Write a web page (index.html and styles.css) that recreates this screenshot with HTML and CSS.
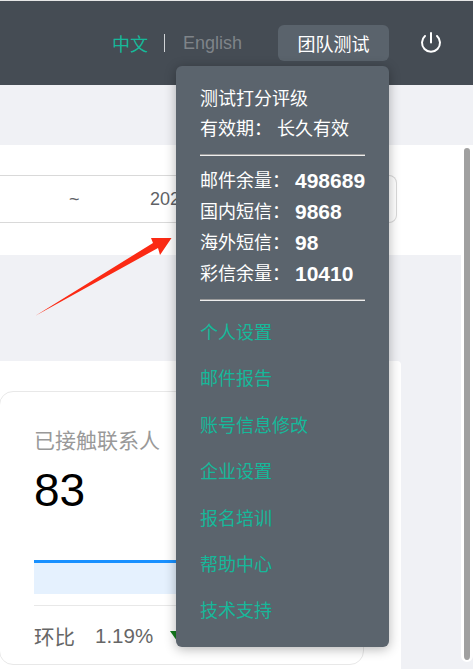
FILE: index.html
```html
<!DOCTYPE html>
<html lang="zh-CN">
<head>
  <meta charset="UTF-8" />
  <meta name="viewport" content="width=device-width, initial-scale=1.0"/>
  <title>团队测试</title>
  <link rel="stylesheet" href="styles.css">
</head>
<body>
  <header class="topbar">
    <a class="lang lang-active">中文</a>
    <span class="lang-sep"></span>
    <a class="lang">English</a>
    <button class="team-btn">团队测试</button>
    <svg class="power" width="22" height="22" viewBox="0 0 22 22" fill="none" stroke="#fff" stroke-width="2" stroke-linecap="round">
      <path d="M11 1V10.500"/>
      <path d="M5 4A9 9 0 1 0 17 4"/>
    </svg>
  </header>

  <main class="content">
    <section class="date-panel">
      <div class="date-range">
        <span class="tilde">~</span>
        <span class="date-end">202</span>
      </div>
    </section>
    <div class="gap-band"></div>
    <section class="stats-panel">
      <div class="stat-card">
        <div class="stat-title">已接触联系人</div>
        <div class="stat-num">83</div>
        <div class="chart"></div>
        <div class="stat-foot">
          <span class="foot-label">环比</span>
          <span class="foot-val">1.19%</span>
          <span class="foot-arrow"></span>
        </div>
      </div>
    </section>
  </main>

  <div class="scroll-thumb"></div>

  <svg class="red-arrow" width="137" height="80" viewBox="0 0 137 80">
    <path fill="#fb2a14" d="M0 78L118 5L116 0L136.500 0L125 17L123 10Z"/>
  </svg>

  <aside class="user-menu">
    <div class="menu-line">测试打分评级</div>
    <div class="menu-line">有效期：&nbsp;长久有效</div>
    <hr class="menu-rule">
    <div class="quota"><span>邮件余量：</span><b>498689</b></div>
    <div class="quota"><span>国内短信：</span><b>9868</b></div>
    <div class="quota"><span>海外短信：</span><b>98</b></div>
    <div class="quota"><span>彩信余量：</span><b>10410</b></div>
    <hr class="menu-rule rule-low">
    <nav class="menu-links">
      <a>个人设置</a>
      <a>邮件报告</a>
      <a>账号信息修改</a>
      <a>企业设置</a>
      <a>报名培训</a>
      <a>帮助中心</a>
      <a>技术支持</a>
    </nav>
  </aside>
</body>
</html>
```

FILE: styles.css
```css
html, body {
  margin: 0;
  height: 669px;
  overflow: hidden;
}
body {
  font-family: "Liberation Sans", "Noto Sans CJK SC", sans-serif;
  background-color: #f0f1f5;
  position: relative;
  border-top: 1px solid #e6e6e6;
  box-sizing: border-box;
}

.topbar {
  height: 84px;
  background-color: #454c54;
  display: flex;
  align-items: center;
  justify-content: flex-end;
  padding: 0 31px 0 0;
  box-sizing: border-box;
}
.lang {
  font-size: 18px;
  color: #7f8489;
}
.lang-active {
  color: #16b89a;
}
.lang-sep {
  width: 1px;
  height: 18px;
  background-color: #d0d3d6;
  margin: 0 18px 0 16px;
}
.team-btn {
  width: 111px;
  height: 36px;
  margin: 0 31px 0 36px;
  border: none;
  border-radius: 6px;
  background-color: #5a636c;
  color: #fff;
  font: 18px "Liberation Sans", "Noto Sans CJK SC", sans-serif;
  padding: 0;
}
.power {
  display: block;
}

.content {
  padding-top: 60px;
}
.scroll-thumb {
  position: absolute;
  left: 461px;
  top: 144px;
  width: 12px;
  height: 517px;
  box-sizing: border-box;
  border: 3px solid #fff;
  border-bottom-width: 2px;
  border-radius: 6px;
  background-color: #a0a0a0;
}

.date-panel {
  height: 110px;
  background-color: #fff;
  padding-top: 30px;
  box-sizing: border-box;
}
.date-range {
  width: 397px;
  height: 48px;
  border: 1px solid #d9d9d9;
  border-left: none;
  border-radius: 0 8px 8px 0;
  box-sizing: border-box;
  display: flex;
  align-items: center;
  color: #606266;
  font-size: 18px;
  white-space: nowrap;
}
.tilde {
  margin-left: 69px;
  width: 81px;
}

.gap-band {
  height: 106px;
}
.stats-panel {
  width: 401px;
  height: 310px;
  background-color: #fff;
  border-radius: 0 4px 0 0;
  padding-top: 30px;
  box-sizing: border-box;
}
.stat-card {
  width: 365px;
  height: 274px;
  margin-left: -1px;
  box-sizing: border-box;
  border: 1px solid #e8e8e8;
  border-radius: 14px;
  padding: 37px 0 0 34px;
}
.stat-title {
  font-size: 21px;
  line-height: 24px;
  color: #999;
  white-space: nowrap;
}
.stat-num {
  font-size: 46px;
  line-height: 52px;
  color: #000;
  margin-top: 11px;
}
.chart {
  height: 34px;
  margin-top: 44px;
  box-sizing: border-box;
  background-color: #e5f1fe;
  border-top: 3px solid #1890ff;
}
.stat-foot {
  border-top: 1px solid #e8e8e8;
  margin-top: 11px;
  padding-top: 15px;
  display: flex;
  align-items: center;
  color: #666;
}
.foot-label {
  font-size: 20.500px;
  margin-right: 20px;
}
.foot-val {
  font-size: 20.500px;
  margin-right: 17px;
}
.foot-arrow {
  width: 0;
  height: 0;
  border-left: 7px solid transparent;
  border-right: 7px solid transparent;
  border-top: 10px solid #157f1f;
}

.red-arrow {
  position: absolute;
  left: 35px;
  top: 237px;
}

.user-menu {
  position: absolute;
  left: 176px;
  top: 65px;
  width: 213px;
  height: 581px;
  box-sizing: border-box;
  padding: 18px 24px 0;
  background-color: #5b646d;
  border-radius: 6px;
  box-shadow: 0 2px 12px rgba(0, 0, 0, 0.3);
  color: #fff;
  font-size: 18px;
}
.menu-line {
  line-height: 30px;
  white-space: nowrap;
}
.menu-rule {
  margin: 10px 0;
  height: 2px;
  box-sizing: border-box;
  border: none;
  border-top: 1px solid #9a9a9a;
  border-bottom: 1px solid #eee;
}
.rule-low {
  margin-top: 9px;
  margin-bottom: 11px;
}
.quota {
  height: 31px;
  line-height: 31px;
  display: flex;
  white-space: nowrap;
}
.quota span {
  width: 95px;
  flex: none;
}
.quota b {
  font-size: 21px;
  line-height: 29px;
}
.menu-links {
  display: flex;
  flex-direction: column;
  margin-top: 17px;
}
.menu-links a {
  color: #16b89a;
  line-height: 30px;
  margin-bottom: 16.400px;
}
```
